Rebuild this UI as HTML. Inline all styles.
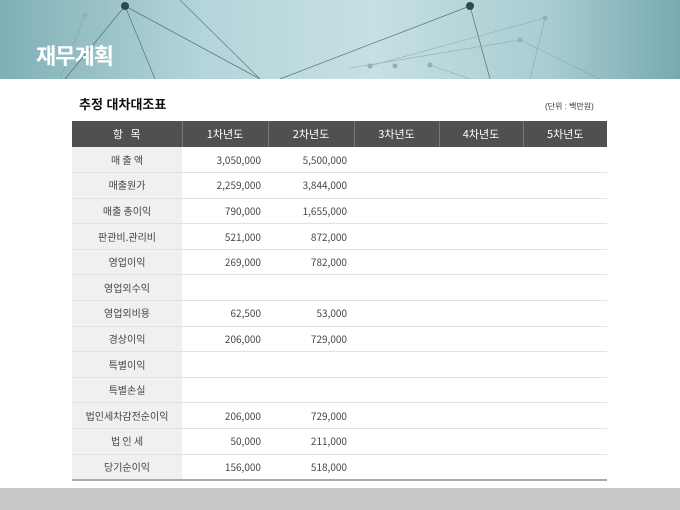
<!DOCTYPE html>
<html><head><meta charset="utf-8"><style>
*{margin:0;padding:0;box-sizing:border-box}
body{width:680px;height:510px;background:#fff;position:relative;overflow:hidden;font-family:"Liberation Sans","Noto Sans CJK KR",sans-serif}
.hdr{position:absolute;left:0;top:0;width:680px;height:79px;background:linear-gradient(90deg,#7fb0b6 0%,#b4d5da 30%,#c6e0e3 55%,#a9cdd2 80%,#78aab1 100%)}
.hdr h1{position:absolute;left:36px;top:39px;font-size:22px;color:#fff;font-weight:bold;letter-spacing:-1px}
.sub{position:absolute;left:79px;top:94px;font-size:13px;font-weight:bold;color:#111}
.unit{position:absolute;left:545px;top:101px;font-size:8px;color:#333}
table{position:absolute;left:72px;top:121px;width:535px;border-collapse:collapse;table-layout:fixed;font-size:10px;color:#444;font-family:"Noto Sans CJK KR",sans-serif;line-height:12px}
th{background:#505050;color:#fff;font-weight:normal;height:26px;border-left:1px solid #777;font-size:11px}
th:first-child{border-left:none}
td{height:25.6px;border-bottom:1px solid #e2e2e2;vertical-align:middle}
td:first-child{background:#f0f0f0;text-align:center}
td.n{text-align:right;padding-right:7px}
tr:last-child td{border-bottom:2px solid #aaa}
.foot{position:absolute;left:0;top:488px;width:680px;height:22px;background:#c8c8c8}
</style></head><body>
<div class="hdr">
<svg width="680" height="79" style="position:absolute;left:0;top:0">
<g stroke="#3d5c62" stroke-width="0.7" fill="none" opacity="0.8">
<line x1="125" y1="6" x2="65" y2="79"/><line x1="125" y1="6" x2="155" y2="79"/><line x1="125" y1="6" x2="260" y2="79"/>
<line x1="180" y1="0" x2="260" y2="79"/><line x1="470" y1="6" x2="280" y2="79"/><line x1="470" y1="6" x2="490" y2="79"/>
</g>
<g stroke="#7a9ca0" stroke-width="0.6" fill="none" opacity="0.7">
<line x1="350" y1="68" x2="520" y2="40"/><line x1="370" y1="66" x2="545" y2="18"/><line x1="430" y1="65" x2="470" y2="79"/>
<line x1="545" y1="18" x2="530" y2="79"/><line x1="520" y1="40" x2="600" y2="79"/><line x1="85" y1="15" x2="60" y2="79"/>
</g>
<circle cx="125" cy="6" r="4" fill="#2e4a50"/><circle cx="470" cy="6" r="4" fill="#2e4a50"/>
<g fill="#8fb0b4"><circle cx="370" cy="66" r="2.5"/><circle cx="395" cy="66" r="2.5"/><circle cx="430" cy="65" r="2.5"/><circle cx="545" cy="18" r="2.5"/><circle cx="520" cy="40" r="2.5"/><circle cx="85" cy="15" r="2.5"/></g>
</svg>
<h1>재무계획</h1></div>
<div class="sub">추정 대차대조표</div>
<div class="unit">(단위 : 백만원)</div>
<table>
<colgroup><col style="width:110px"><col style="width:86px"><col style="width:86px"><col style="width:85px"><col style="width:84px"><col style="width:84px"></colgroup>
<tr><th>항 &nbsp; 목</th><th>1차년도</th><th>2차년도</th><th>3차년도</th><th>4차년도</th><th>5차년도</th></tr>
<tr><td>매 출 액</td><td class="n">3,050,000</td><td class="n">5,500,000</td><td></td><td></td><td></td></tr>
<tr><td>매출원가</td><td class="n">2,259,000</td><td class="n">3,844,000</td><td></td><td></td><td></td></tr>
<tr><td>매출 총이익</td><td class="n">790,000</td><td class="n">1,655,000</td><td></td><td></td><td></td></tr>
<tr><td>판관비.관리비</td><td class="n">521,000</td><td class="n">872,000</td><td></td><td></td><td></td></tr>
<tr><td>영업이익</td><td class="n">269,000</td><td class="n">782,000</td><td></td><td></td><td></td></tr>
<tr><td>영업외수익</td><td></td><td></td><td></td><td></td><td></td></tr>
<tr><td>영업외비용</td><td class="n">62,500</td><td class="n">53,000</td><td></td><td></td><td></td></tr>
<tr><td>경상이익</td><td class="n">206,000</td><td class="n">729,000</td><td></td><td></td><td></td></tr>
<tr><td>특별이익</td><td></td><td></td><td></td><td></td><td></td></tr>
<tr><td>특별손실</td><td></td><td></td><td></td><td></td><td></td></tr>
<tr><td>법인세차감전순이익</td><td class="n">206,000</td><td class="n">729,000</td><td></td><td></td><td></td></tr>
<tr><td>법 인 세</td><td class="n">50,000</td><td class="n">211,000</td><td></td><td></td><td></td></tr>
<tr><td>당기순이익</td><td class="n">156,000</td><td class="n">518,000</td><td></td><td></td><td></td></tr>
</table>
<div class="foot"></div>
</body></html>
